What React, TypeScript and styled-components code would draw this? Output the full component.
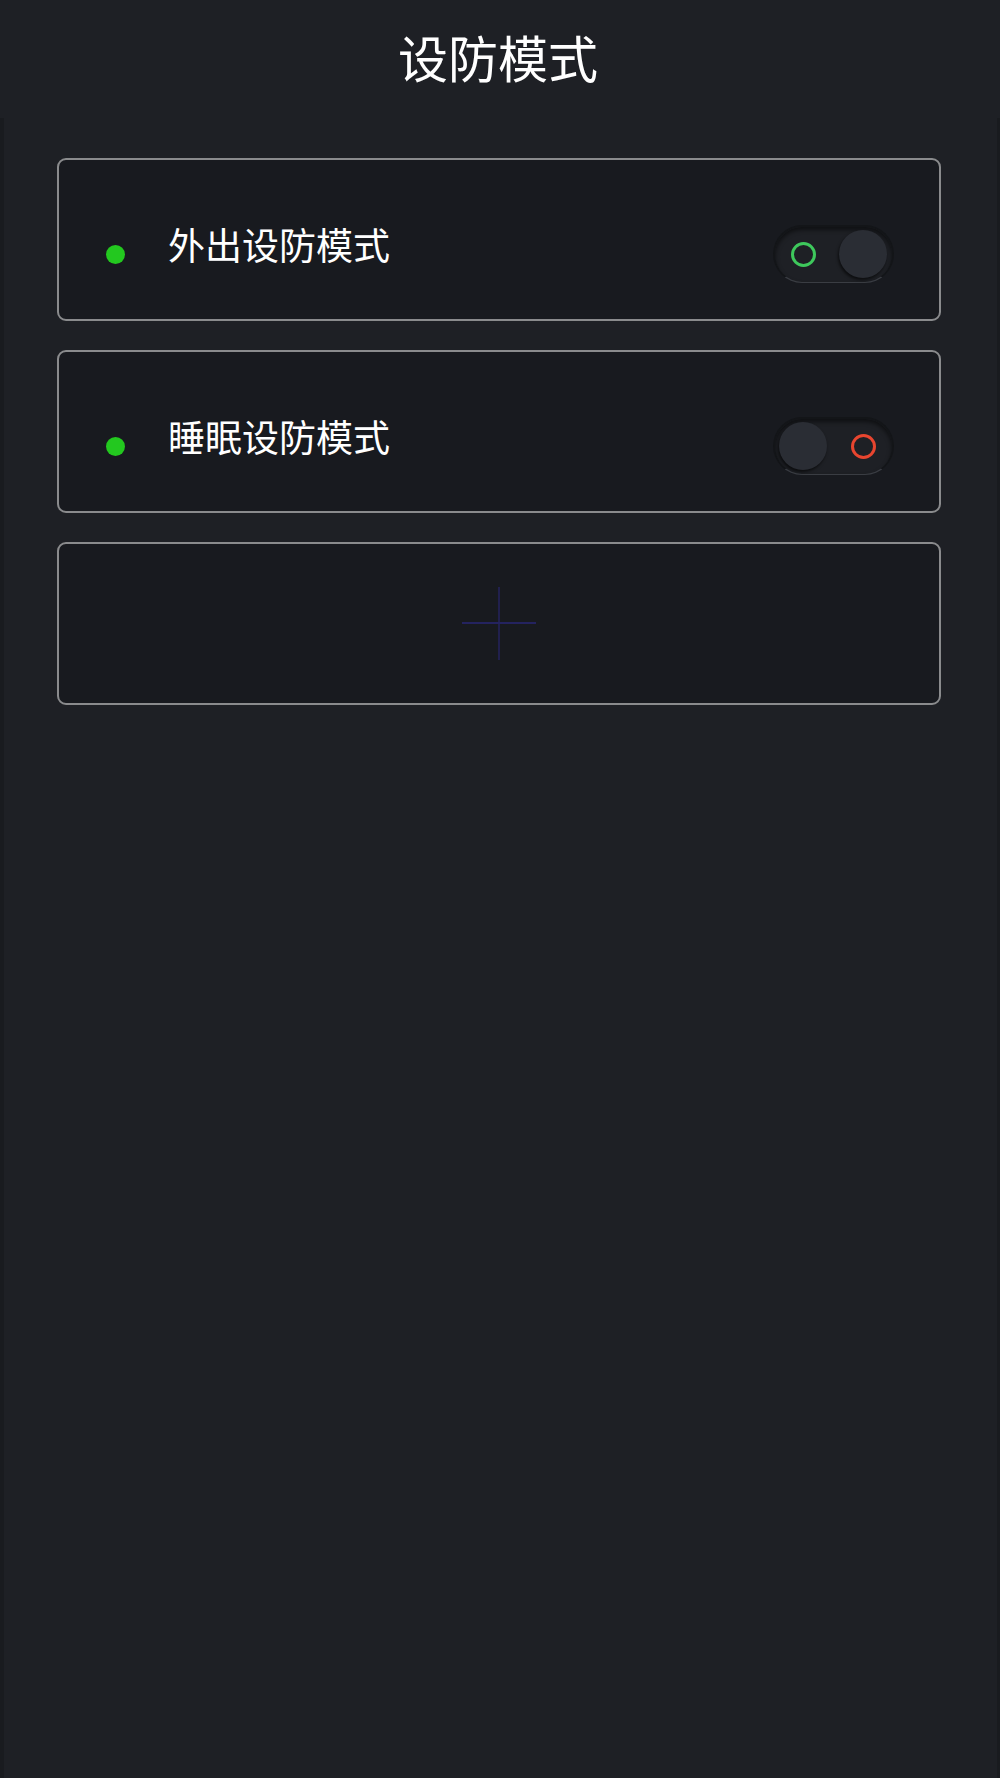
import React, { useState } from "react";
import styled, { createGlobalStyle } from "styled-components";

const GlobalStyle = createGlobalStyle`
  html, body { margin: 0; padding: 0; background: #1e2025; }
  body { font-family: "Noto Sans CJK SC", "Noto Sans", sans-serif; color: #fff; }
  * { box-sizing: border-box; }
`;

const Page = styled.div`
  min-height: 1778px;
  display: flex;
  flex-direction: column;
  background: #1e2025;
`;

const Header = styled.header`
  height: 118px;
  display: flex;
  align-items: center;
  justify-content: center;
  padding: 0 4px 6px 0;
  background: #1e2025;
`;

const Title = styled.h1`
  margin: 0;
  font-size: 50px;
  font-weight: 400;
  color: #ffffff;
  line-height: 1;
`;

const Body = styled.main`
  flex: 1;
  display: flex;
  flex-direction: column;
  gap: 29px;
  padding: 40px 56px 0 53px;
  border-left: 4px solid #191b1f;
  border-right: 3px solid #191b1f;
  background: #1e2025;
`;

const Card = styled.div`
  height: 163px;
  border: 2px solid #8a8b8d;
  border-radius: 9px;
  background: #181a1f;
  display: flex;
  align-items: center;
  padding: 29px 45px 0 47px;
`;

const AddCard = styled(Card)`
  justify-content: center;
  padding: 0;
`;

const Dot = styled.span`
  width: 19px;
  height: 19px;
  border-radius: 50%;
  background: #23c81f;
  flex-shrink: 0;
`;

const Label = styled.span`
  margin-left: 43px;
  margin-bottom: 20px;
  font-size: 37px;
  line-height: 1.2;
  color: #ffffff;
  flex: 1;
`;

const Track = styled.button`
  position: relative;
  width: 121px;
  height: 58px;
  padding: 0;
  border-radius: 29px;
  border: 2px solid #131518;
  border-bottom: 1px solid #3a3d43;
  background: #1e2025;
  box-shadow: inset 0 3px 4px rgba(0, 0, 0, 0.5);
  cursor: pointer;
  flex-shrink: 0;
`;

const Knob = styled.span<{ $on: boolean }>`
  position: absolute;
  top: 3px;
  left: ${(p) => (p.$on ? "64px" : "4px")};
  width: 48px;
  height: 48px;
  border-radius: 50%;
  background: #2a2d34;
  box-shadow: -1px 2px 3px rgba(0, 0, 0, 0.6);
`;

const Ring = styled.span<{ $on: boolean }>`
  position: absolute;
  top: 15px;
  left: ${(p) => (p.$on ? "16px" : "76px")};
  width: 25px;
  height: 25px;
  border-radius: 50%;
  border: 3px solid ${(p) => (p.$on ? "#3ec85c" : "#e8452f")};
`;

const Plus = styled.svg`
  width: 76px;
  height: 76px;
  display: block;
`;

function Toggle({ initial }: { initial: boolean }) {
  const [on, setOn] = useState(initial);
  return (
    <Track onClick={() => setOn(!on)} aria-pressed={on}>
      <Ring $on={on} />
      <Knob $on={on} />
    </Track>
  );
}

export default function App() {
  const modes = [
    { name: "外出设防模式", on: true },
    { name: "睡眠设防模式", on: false },
  ];
  return (
    <>
      <GlobalStyle />
      <Page>
        <Header>
          <Title>设防模式</Title>
        </Header>
        <Body>
          {modes.map((m) => (
            <Card key={m.name}>
              <Dot />
              <Label>{m.name}</Label>
              <Toggle initial={m.on} />
            </Card>
          ))}
          <AddCard>
            <Plus viewBox="0 0 76 76">
              <line x1="38" y1="1" x2="38" y2="74" stroke="#24235f" strokeWidth="1.5" />
              <line x1="1" y1="37" x2="75" y2="37" stroke="#24235f" strokeWidth="2" />
            </Plus>
          </AddCard>
        </Body>
      </Page>
    </>
  );
}
